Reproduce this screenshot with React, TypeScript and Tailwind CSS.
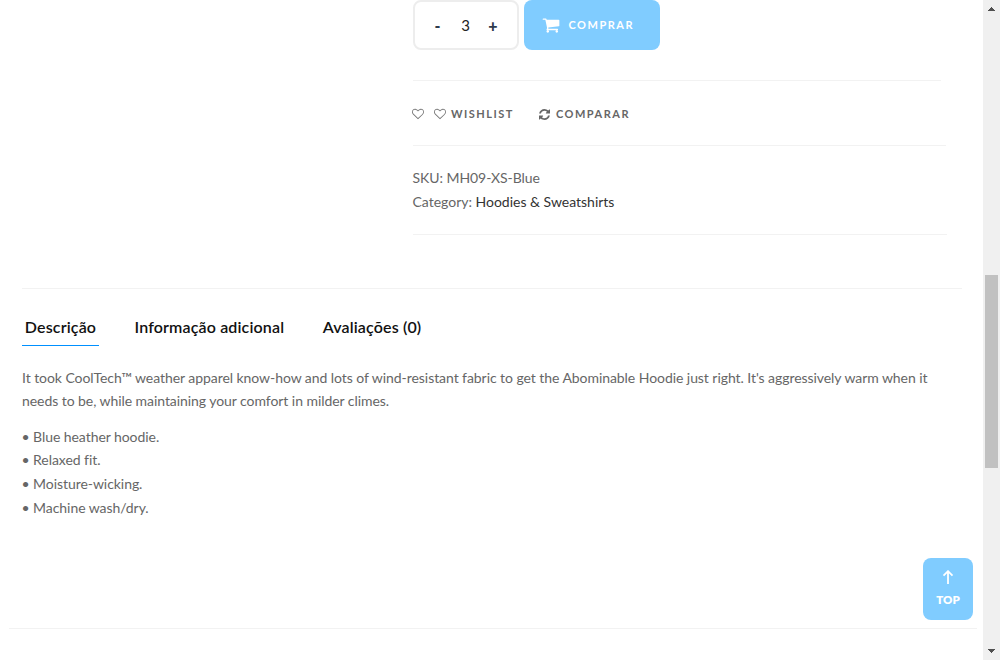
import type { ReactNode } from "react";

const HEART =
  "M1664 596q0-81-21.5-143t-55-98.5-81.5-59.5-94-31-98-8-112 25.5-110.5 64-86.5 72-60 61.5q-18 22-49 22t-49-22q-24-28-60-61.5t-86.5-72-110.5-64-112-25.5-98 8-94 31-81.5 59.5-55 98.5-21.5 143q0 168 187 355l581 560 580-559q188-188 188-356zm128 0q0 221-229 450l-623 600q-18 18-44 18t-44-18l-624-602q-10-8-27.5-26t-55.5-65.5-68-97.5-53.5-121-23.5-138q0-220 127-344t351-124q62 0 126.5 21.5t120 58 95.5 68.5 76 68q36-36 76-68t95.5-68.5 120-58 126.5-21.5q224 0 351 124t127 344z";
const REFRESH =
  "M1511 928q0 5-1 7-64 268-268 434.5t-478 166.5q-146 0-282.5-55t-243.5-157l-129 129q-19 19-45 19t-45-19-19-45v-448q0-26 19-45t45-19h448q26 0 45 19t19 45-19 45l-137 137q71 66 161 102t187 36q134 0 250-65t186-179q11-17 53-117 8-23 30-23h192q13 0 22.5 9.5t9.5 22.5zm25-800v448q0 26-19 45t-45 19h-448q-26 0-45-19t-19-45 19-45l138-138q-148-137-349-137-134 0-250 65t-186 179q-11 17-53 117-8 23-30 23h-199q-13 0-22.5-9.5t-9.5-22.5v-7q65-268 270-434.5t480-166.5q146 0 284 55.5t245 156.5l130-129q19-19 45-19t45 19 19 45z";
const CART =
  "M704 1536q0 52-38 90t-90 38-90-38-38-90 38-90 90-38 90 38 38 90zm896 0q0 52-38 90t-90 38-90-38-38-90 38-90 90-38 90 38 38 90zm128-1088v512q0 24-16.5 42.5t-40.5 21.5l-1044 122q13 60 13 70 0 16-24 64h920q26 0 45 19t19 45-19 45-45 19h-1024q-26 0-45-19t-19-45q0-11 8-31.5t16-36 21.5-40 15.5-29.5l-177-823h-204q-26 0-45-19t-19-45 19-45 45-19h256q16 0 28.5 6.5t19.5 15.5 13 24.5 8 26 5.5 29.5 4.5 26h1201q26 0 45 19t19 45z";

function Icon({ d, box = "0 0 1792 1792", className }: { d: string; box?: string; className: string }) {
  return (
    <svg viewBox={box} fill="currentColor" className={`shrink-0 ${className}`} aria-hidden="true">
      <path d={d} />
    </svg>
  );
}

function Tab({ active = false, children }: { active?: boolean; children: ReactNode }) {
  return (
    <button
      className={`h-[37px] border-b pb-px text-base leading-[36px] font-semibold tracking-[0.15px] whitespace-nowrap text-[#111] ${
        active ? "border-[#0090ff]" : "border-transparent"
      }`}
    >
      {children}
    </button>
  );
}

function Purchase() {
  return (
    <section className="ml-[413px] w-[534px]">
      <div className="flex gap-[5px]">
        <div className="flex h-[50px] w-[106px] items-center rounded-lg border-2 border-[#ededed] pt-px text-[#2f3b4c]">
          <button className="ml-[16px] w-[13px] text-center text-base font-black">-</button>
          <span className="ml-[14px] w-[15px] text-center text-[15px] text-[#222]">3</span>
          <button className="ml-[13px] w-[14px] text-center text-base font-black">+</button>
        </div>
        <button className="flex h-[50px] w-[136px] items-center rounded-lg bg-[#80ccff] pl-[18px] text-[11px] font-bold tracking-[1.5px] text-white">
          <Icon d={CART} className="size-[18px]" />
          <span className="ml-[8.5px]">COMPRAR</span>
        </button>
      </div>
      <div className="mt-[30px] h-px w-[528px] bg-[#f2f2f2]" />
      <div className="flex h-[64px] items-center pt-[2px] text-[11px] font-bold tracking-[1.5px] text-[#666]">
        <Icon d={HEART} className="-ml-px size-[12px] text-[#777]" />
        <Icon d={HEART} className="ml-[9.5px] size-[12px] text-[#777]" />
        <span className="ml-[5.5px]">WISHLIST</span>
        <Icon d={REFRESH} box="0 0 1536 1536" className="ml-[25px] size-[11px]" />
        <span className="ml-[6px]">COMPARAR</span>
      </div>
      <div className="h-px w-[533px] bg-[#f2f2f2]" />
      <div className="-ml-[0.5px] h-[88px] pt-[20px] text-sm leading-6 tracking-[-0.06px] text-[#666]">
        <p>SKU: MH09-XS-Blue</p>
        <p className="tracking-[-0.01px]">
          Category: <a className="text-[#333]">Hoodies &amp; Sweatshirts</a>
        </p>
      </div>
      <div className="h-px bg-[#f2f2f2]" />
    </section>
  );
}

function Details() {
  return (
    <section className="mt-[53px] ml-[22px] w-[940px] border-t border-[#f2f2f2]">
      <div className="flex pt-[20px]">
        <div className="flex w-[77px] justify-center *:w-full">
          <Tab active>Descrição</Tab>
        </div>
        <div className="ml-[35.5px]">
          <Tab>Informação adicional</Tab>
        </div>
        <div className="ml-[38.5px]">
          <Tab>Avaliações (0)</Tab>
        </div>
      </div>
      <div className="pt-[19.7px] text-sm leading-[23.6px] tracking-[-0.06px] text-[#666]">
        <p>
          It took CoolTech™ weather apparel know-how and lots of wind-resistant fabric to get the Abominable Hoodie just
          right. It's aggressively warm when it
          <br />
          needs to be, while maintaining your comfort in milder climes.
        </p>
        <p className="mt-[12px] -ml-[0.5px]">
          • Blue heather hoodie.
          <br />• Relaxed fit.
          <br />• Moisture-wicking.
          <br />• Machine wash/dry.
        </p>
      </div>
    </section>
  );
}

function Scrollbar() {
  return (
    <div className="flex h-full w-[17px] flex-col items-center bg-[#f0f0f0]">
      <svg viewBox="0 0 7 4" className="mt-[7px] h-[4px] w-[7px]" fill="#505050" shapeRendering="crispEdges">
        <path d="M3 0h1v1h1v1h1v1h1v1H0V3h1V2h1V1h1z" />
      </svg>
      <div className="mt-[264px] mr-[2px] ml-[2px] h-[193px] w-[13px] bg-[#c1c1c1]" />
      <svg viewBox="0 0 7 4" className="mt-auto mb-[7px] h-[4px] w-[7px]" fill="#505050" shapeRendering="crispEdges">
        <path d="M0 0h7v1H6v1H5v1H4v1H3V3H2V2H1V1H0z" />
      </svg>
    </div>
  );
}

export default function App() {
  return (
    <div className="flex h-[660px] w-[1000px] overflow-hidden bg-white font-['Lato',sans-serif]">
      <main className="relative flex w-[983px] flex-col">
        <Purchase />
        <Details />
        <div className="mt-auto mb-[31px] ml-[9px] h-px w-[968px] bg-[#f2f2f2]" />
        <button className="absolute top-[558px] left-[923px] flex h-[62px] w-[50px] flex-col items-center rounded-lg bg-[#80ccff] text-[11.5px] font-extrabold text-white">
          <svg viewBox="0 0 12 14" className="mt-[12px] h-[14px] w-[12px]" fill="none" stroke="currentColor" strokeWidth="1.8">
            <path d="M6 14V1M1.5 5.7L6 1.2l4.5 4.5" />
          </svg>
          <span className="mt-[8px] leading-4">TOP</span>
        </button>
      </main>
      <Scrollbar />
    </div>
  );
}
